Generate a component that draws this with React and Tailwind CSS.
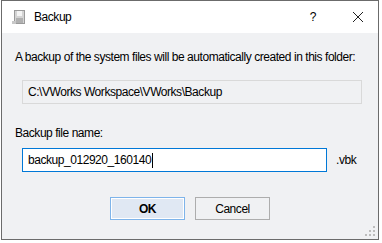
import React from 'react';

// Small gray "backup" glyph used in the title bar
function BackupIcon() {
  return (
    <svg width="16" height="16" viewBox="0 0 16 16">
      <rect x="2" y="1" width="11" height="14" fill="#9a9a9a" />
      <rect x="3" y="2" width="9" height="12" fill="#d4d4d4" />
      <rect x="5" y="2" width="5" height="5" fill="#f4f4f4" />
      <rect x="4" y="9" width="7" height="5" fill="#b0b0b0" />
      <rect x="0" y="12" width="4" height="3" fill="#c8c8c8" />
    </svg>
  );
}

function ResizeGrip() {
  const dots = [
    [8, 0],
    [4, 4], [8, 4],
    [0, 8], [4, 8], [8, 8],
  ];
  return (
    <svg width="11" height="11" viewBox="0 0 11 11" className="absolute right-[2px] bottom-[2px]">
      {dots.map(([x, y]) => (
        <rect key={`${x}-${y}`} x={x} y={y} width="2" height="2" fill="#bcbcbc" />
      ))}
    </svg>
  );
}

export default function App() {
  return (
    <div
      className="w-[382px] h-[243px] bg-white text-[12px] tracking-[-0.45px] text-black"
      style={{ fontFamily: '"Liberation Sans", Arial, sans-serif' }}
    >
      <div className="relative ml-[1px] w-[378px] h-[240px] border border-[#6b6b6b] flex flex-col">
        {/* title bar */}
        <div className="h-[32px] bg-white flex items-center pl-[10px] pr-[14px]">
          <BackupIcon />
          <span className="ml-[6px] text-[12px]">Backup</span>
          <span className="ml-auto mr-[36px] text-[12px]">?</span>
          <svg width="12" height="12" viewBox="0 0 12 12">
            <path d="M1 1 L11 11 M11 1 L1 11" stroke="#222" strokeWidth="1" fill="none" />
          </svg>
        </div>

        {/* body */}
        <div className="flex-1 bg-[#f0f1f3] pl-[13px] pt-[16px] flex flex-col">
          <p className="leading-[16px] whitespace-nowrap">
            A backup of the system files will be automatically created in this folder:
          </p>
          <div className="mt-[15px] ml-[7px] w-[340px] h-[24px] border border-[#d9d9d9] bg-[#f0f1f3] flex items-center pl-[5px]">
            C:\VWorks Workspace\VWorks\Backup
          </div>

          <p className="mt-[21px] leading-[16px]">Backup file name:</p>
          <div className="mt-[7px] ml-[7px] flex items-center">
            <div className="w-[305px] h-[24px] border border-[#0078d7] bg-white flex items-center pl-[5px]">
              <span>backup_012920_160140</span>
              <span className="ml-[1px] w-[1px] h-[15px] bg-black" />
            </div>
            <span className="ml-[9px]">.vbk</span>
          </div>

          <div className="mt-[25px] flex justify-center gap-[10px] pr-[13px]">
            <button
              type="button"
              className="w-[75px] h-[23px] border border-[#7eb4ea] bg-[#e0e8f3] shadow-[inset_0_0_0_1px_#ffffff] font-bold"
            >
              OK
            </button>
            <button
              type="button"
              className="w-[75px] h-[23px] border border-[#adadad] bg-[#f0f1f3]"
            >
              Cancel
            </button>
          </div>
        </div>
        <ResizeGrip />
      </div>
    </div>
  );
}
